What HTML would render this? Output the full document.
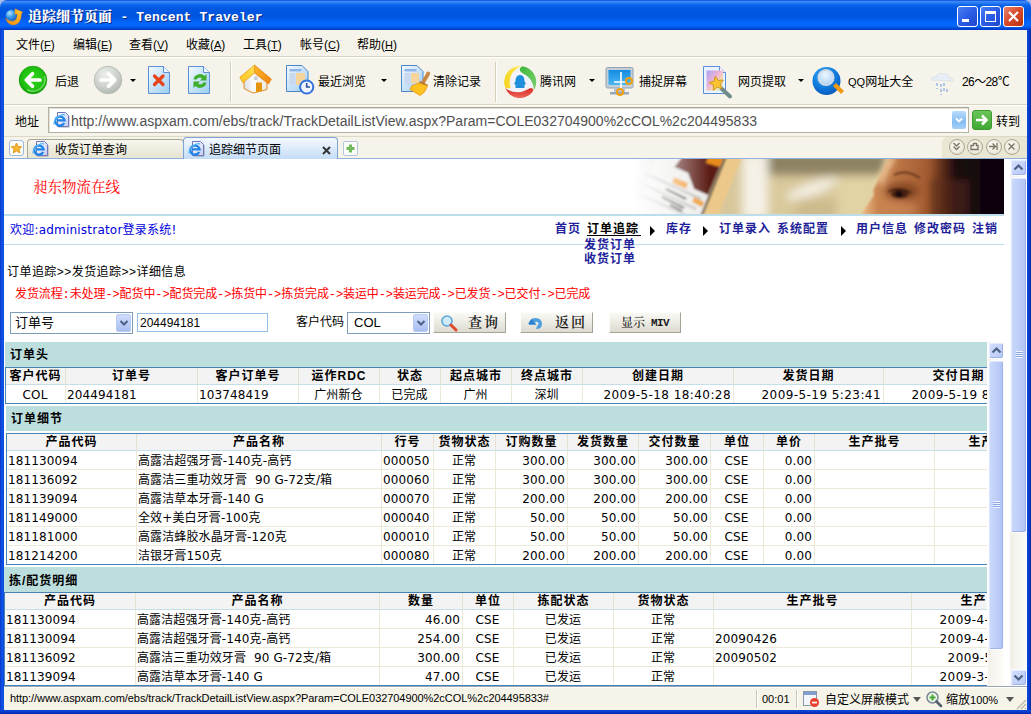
<!DOCTYPE html>
<html lang="zh-CN">
<head>
<meta charset="utf-8">
<title>追踪细节页面 - Tencent Traveler</title>
<style>
*{box-sizing:border-box;margin:0;padding:0}
html,body{width:1031px;height:714px;overflow:hidden}
body{position:relative;background:#0a3fd0;font-family:"Liberation Sans","Noto Sans CJK SC",sans-serif;font-size:12px;color:#000}
.abs{position:absolute}
#frame{position:absolute;left:0;top:0;width:1031px;height:714px;background:linear-gradient(90deg,#0b36c9 0,#0f55e8 2px,#0a4ad8 4px,#0a4ad8 1027px,#0b3ccf 1029px,#062a9c 1031px)}
#titlebar{position:absolute;left:0;top:0;width:1031px;height:30px;border-radius:7px 7px 0 0;
 background:linear-gradient(180deg,#0a44d6 0,#3a8af8 1.5px,#2a7cf4 3px,#0c63ea 5px,#0057e2 9px,#0055e0 17px,#0364fa 22px,#0468ff 26px,#0250dc 28px,#0238c0 30px)}
#title{position:absolute;left:28px;top:8px;height:18px;line-height:18px;color:#fff;font-weight:bold;font-size:14px;white-space:nowrap;text-shadow:1px 1px 0 #0a2a80;font-family:"Liberation Mono","Noto Serif CJK SC",serif}
#title .lat{font-size:13px;letter-spacing:0.1px}
.wbtn{position:absolute;top:6px;width:21px;height:21px;border:1px solid #fff;border-radius:3px;background:linear-gradient(135deg,#4a7ef4 0,#2b5ce6 50%,#1f48cc 100%)}
#client{position:absolute;left:4px;top:30px;width:1023px;height:680px;background:#f6f4ea}
#menubar{position:absolute;left:0;top:0;width:1023px;height:26px;background:#f6f4ea}
#menubar span{position:absolute;top:8px;line-height:14px;font-size:12px;white-space:nowrap}
#menubar u{font-size:11px}
#toolbar{position:absolute;left:0;top:26px;width:1023px;height:48px;border-top:1px solid #d8d4c0;box-shadow:inset 0 1px 0 #fff;background:#f6f4ea}
#toolbar .lbl{position:absolute;top:18px;line-height:14px;font-size:12px;white-space:nowrap}
#addrbar{position:absolute;left:0;top:74px;width:1023px;height:32px;border-top:1px solid #d8d4c0;box-shadow:inset 0 1px 0 #fff;background:#f6f4ea}
#tabbar{position:absolute;left:0;top:106px;width:1023px;height:23px;background:#f6f4ea}
#page{position:absolute;left:0;top:129px;width:1006px;height:527px;background:#fff;overflow:hidden}
#vscroll{position:absolute;left:1006px;top:129px;width:17px;height:527px;background:linear-gradient(90deg,#f0efe6,#fdfdfa)}
#status{position:absolute;left:0;top:656px;width:1023px;height:24px;background:#f6f4e8;border-top:1px solid #9ca6b4;box-shadow:inset 0 1px 0 #fff}

/* ---- page ---- */
#pg{position:absolute;left:-4px;top:-159px;width:1031px;height:714px;font-family:"DejaVu Sans","Noto Sans CJK SC",sans-serif;font-size:12px}
#pg .a{position:absolute;white-space:nowrap;line-height:14px}
.hline{position:absolute;left:4px;width:1000px;height:2px;background:#bcdde9}
.nav{font-weight:bold;color:#1f1f9a;font-family:"Liberation Sans","Noto Sans CJK SC",sans-serif;letter-spacing:1px}
.sim{font-family:"Liberation Mono","Noto Sans CJK SC",monospace}
#inner{position:absolute;left:4px;top:342px;width:983px;height:344px;overflow:hidden;background:#fff}
#inner .in{position:absolute;left:-4px;top:-342px;width:1100px;height:714px}
.bar{position:absolute;background:#bcdedd;font-weight:bold;font-family:"Liberation Sans","Noto Sans CJK SC",sans-serif;letter-spacing:1px}
.bar span{position:absolute;white-space:nowrap;line-height:14px}
table.g{position:absolute;border-collapse:separate;border-spacing:0;table-layout:fixed;border:1px solid #4682b4;background:#fff}
table.g th{height:17px;background:#f3f3f3;border-right:1px solid #e6e2d2;border-bottom:1px solid #c5dfea;font-weight:bold;font-size:12px;line-height:14px;padding:0;text-align:center;white-space:nowrap;overflow:hidden;font-family:"Liberation Sans","Noto Sans CJK SC",sans-serif;letter-spacing:1px}
table.g td{height:19px;border-right:1px solid #ece9d8;border-bottom:1px solid #ece9d8;font-size:12px;line-height:14px;padding:2px 2px 0 1px;white-space:nowrap;overflow:hidden;letter-spacing:0.12px}
table.g tr:last-child td{border-bottom:none;height:18px}
table.g td.c{text-align:center}
table.g td.z{text-align:center;padding-top:1px}
table.g td.r{text-align:right}
table.g td.d{text-align:right;letter-spacing:0.43px}

/* ---- toolbar ---- */
.tsep{position:absolute;top:5px;width:2px;height:40px;border-left:1px solid #d4d0bc;border-right:1px solid #fff}
.dd{position:absolute;top:22px;width:0;height:0;border-top:3px solid #000;border-left:3px solid transparent;border-right:3px solid transparent}
#toolbar svg{position:absolute}

/* ---- address / tabs ---- */
#addrbar .lbl{position:absolute;left:11px;top:10px;line-height:14px;font-size:12px}
#addrbox{position:absolute;left:44px;top:2px;width:921px;height:26px;background:#fff;border:1px solid #b4b2a2;border-top-color:#a8a696;box-shadow:inset 1px 1px 0 #e4e2d6}
#url{position:absolute;left:22px;top:4px;line-height:18px;font-size:14px;color:#505050;white-space:nowrap;font-family:"Liberation Sans",sans-serif}
.tab{position:absolute;border:1px solid #a9a791;border-bottom:none;border-radius:4px 4px 0 0}
.tab span{position:absolute;top:3px;line-height:14px;font-size:12px;white-space:nowrap}
.cbtn{position:absolute;top:3px;width:16px;height:16px;border-radius:50%;border:1px solid #a9a68f;background:radial-gradient(circle at 40% 35%,#fbfaf4,#e3e0cf)}

/* ---- form / scrollbars / status ---- */
.sel{position:absolute;height:22px;background:#fff;border:1px solid #7f9db9}
.sel span{position:absolute;left:4px;top:3px;line-height:14px;font-size:12px;white-space:nowrap}
.sel .ar{position:absolute;right:1px;top:1px;width:15px;height:18px;border-radius:2px;border:1px solid #b7cbf3;background:linear-gradient(180deg,#cfdcfc,#b5c9f6 70%,#a9bdf0)}
.btn{position:absolute;top:312px;height:21px;border:1px solid;border-color:#fdfdfb #a5a398 #a5a398 #fdfdfb;background:linear-gradient(180deg,#f9f9f5,#ecebe3 50%,#dddbd0);color:#1a1a1a;font-weight:600;white-space:nowrap;font-family:"Liberation Serif","Noto Serif CJK SC",serif}
.btn span{position:absolute;line-height:16px}
.sb-thumb{position:absolute;border:1px solid #fbfcff;border-radius:3px;background:linear-gradient(90deg,#cbd9fc,#bfcff9 50%,#b0c2f3);box-shadow:inset -1px -1px 0 #9fb3e8,inset 1px 1px 0 #dfe7fd}
.sb-btn{position:absolute;border:1px solid #fbfcff;border-radius:3px;background:linear-gradient(135deg,#d3dffd,#b7c8f6);box-shadow:inset -1px -1px 0 #9fb3e8,inset 1px 1px 0 #e6ecfe}
.grip{position:absolute;left:4px;width:7px;height:7px;background:repeating-linear-gradient(180deg,#eef3ff 0,#eef3ff 1px,#8da6e6 1px,#8da6e6 2px)}
#status span{position:absolute;top:6px;line-height:14px;font-size:12px;white-space:nowrap}
#status .sep{position:absolute;top:3px;width:2px;height:18px;border-left:1px solid #c9c6b3;border-right:1px solid #fff}
#status .dn{position:absolute;top:10px;width:0;height:0;border-top:5px solid #555;border-left:4px solid transparent;border-right:4px solid transparent}
</style>
</head>
<body>
<div id="frame"></div><div class="abs" style="left:0;top:710px;width:1031px;height:4px;background:linear-gradient(180deg,#0a48d6,#0a3ccc 50%,#04249e)"></div>
<div class="abs" style="left:0;top:0;width:8px;height:8px;background:#a9b8e8"></div><div class="abs" style="left:1023px;top:0;width:8px;height:8px;background:#a9b8e8"></div><div id="titlebar">
  <svg style="position:absolute;left:5px;top:8px" width="18" height="18" viewBox="0 0 18 18"><defs><radialGradient id="ti" cx="0.35" cy="0.3" r="0.8"><stop offset="0" stop-color="#b9e4ff"/><stop offset="0.45" stop-color="#3a9cee"/><stop offset="1" stop-color="#0f5cc4"/></radialGradient><linearGradient id="tio" x1="0" y1="1" x2="1" y2="0"><stop offset="0" stop-color="#f08a10"/><stop offset="1" stop-color="#ffc432"/></linearGradient></defs><circle cx="6.400" cy="7.400" r="5.600" fill="url(#ti)"/><path d="M0.600 10.300 Q3 17.500 9 17 Q16.200 16 16.400 6 L17.600 4 L10 0.800 L9.800 6.500 L12 5.800 Q12.800 11.500 8.500 13 Q4 14 0.600 10.300 Z" fill="url(#tio)" stroke="#e07e0c" stroke-width="0.400"/></svg><div id="title"><span style="font-weight:900">追踪细节页面</span> <span class="lat">- Tencent Traveler</span></div>
  <div class="wbtn" style="left:957px"><div class="abs" style="left:4px;top:12px;width:7px;height:3px;background:#fff"></div></div>
  <div class="wbtn" style="left:980px"><div class="abs" style="left:4px;top:4px;width:11px;height:11px;border:1px solid #fff;border-top-width:3px"></div></div>
  <div class="wbtn" style="left:1003px;background:linear-gradient(135deg,#e8836a 0,#d8492a 50%,#b8320f 100%)"><svg width="19" height="19" viewBox="0 0 19 19" style="position:absolute;left:0;top:0"><path d="M5 5 L14 14 M14 5 L5 14" stroke="#fff" stroke-width="2.200"/></svg></div>
</div>
<div id="client">
  <div id="menubar">
    <span style="left:12px">文件(<u>F</u>)</span>
    <span style="left:69px">编辑(<u>E</u>)</span>
    <span style="left:125px">查看(<u>V</u>)</span>
    <span style="left:182px">收藏(<u>A</u>)</span>
    <span style="left:239px">工具(<u>T</u>)</span>
    <span style="left:296px">帐号(<u>C</u>)</span>
    <span style="left:353px">帮助(<u>H</u>)</span>
  </div>
  <div id="toolbar">
<svg style="left:14px;top:8px" width="30" height="30" viewBox="0 0 30 30"><defs><radialGradient id="gb" cx="0.5" cy="0.45" r="0.55"><stop offset="0" stop-color="#30d41e"/><stop offset="0.7" stop-color="#20c212"/><stop offset="0.88" stop-color="#1ab00e"/><stop offset="1" stop-color="#0f9208"/></radialGradient><radialGradient id="gg" cx="0.4" cy="0.3" r="0.8"><stop offset="0" stop-color="#eef0ec"/><stop offset="0.6" stop-color="#c9cfc8"/><stop offset="1" stop-color="#a9b0a8"/></radialGradient></defs><circle cx="15" cy="15" r="13.800" fill="url(#gb)" stroke="#14a00c" stroke-width="0.800"/><path d="M9 24.500 A12 12 0 0 0 26.500 11" fill="none" stroke="#8ee87e" stroke-width="1.600" opacity="0.7"/><path d="M9 15 H22 M14.500 8.800 L8.300 15 L14.500 21.200" fill="none" stroke="#fff" stroke-width="3.700" stroke-linecap="round" stroke-linejoin="round"/></svg>
<span class="lbl" style="left:51px">后退</span>
<svg style="left:89px;top:8px" width="30" height="30" viewBox="0 0 30 30"><circle cx="15" cy="15" r="13.8" fill="url(#gg)" stroke="#b4bab2" stroke-width="0.8"/><path d="M21 15 H8 M15.500 8.800 L21.700 15 L15.500 21.200" fill="none" stroke="#fff" stroke-width="3.700" stroke-linecap="round" stroke-linejoin="round"/></svg>
<div class="dd" style="left:126px"></div>
<svg style="left:143px;top:8px" width="26" height="30" viewBox="0 0 26 30"><defs><linearGradient id="pgd" x1="0" y1="0" x2="1" y2="1"><stop offset="0" stop-color="#f4faff"/><stop offset="1" stop-color="#9ccdf3"/></linearGradient></defs><path d="M1.500 1.500 H16.500 L22.500 7.500 V28.500 H1.500 Z" fill="url(#pgd)" stroke="#5a90d4" stroke-width="1"/><path d="M16.500 1.500 V7.500 H22.500" fill="#eef7ff" stroke="#5a90d4" stroke-width="1"/><path d="M7.500 11 L16 19.500 M16 11 L7.500 19.500" stroke="#e8431a" stroke-width="3.200" stroke-linecap="round"/></svg>
<svg style="left:183px;top:8px" width="26" height="30" viewBox="0 0 26 30"><path d="M1.500 1.500 H16.500 L22.500 7.500 V28.500 H1.500 Z" fill="url(#pgd)" stroke="#5a90d4" stroke-width="1"/><path d="M16.500 1.500 V7.500 H22.500" fill="#eef7ff" stroke="#5a90d4" stroke-width="1"/><path d="M6.5 14.5 A6.5 6.5 0 0 1 17.5 11 L19.5 9 V15.5 H13 L15 13.4 A3.6 3.6 0 0 0 9.6 14.5 Z" fill="#3fae2a"/><path d="M19.5 17.5 A6.5 6.5 0 0 1 8.5 21 L6.5 23 V16.5 H13 L11 18.6 A3.6 3.6 0 0 0 16.4 17.5 Z" fill="#3fae2a"/></svg>
<div class="tsep" style="left:226px"></div>
<svg style="left:235px;top:7px" width="34" height="32" viewBox="0 0 34 32"><defs><linearGradient id="rfl" x1="0" y1="1" x2="1" y2="0"><stop offset="0" stop-color="#ffc21a"/><stop offset="1" stop-color="#ffe25a"/></linearGradient><linearGradient id="rf" x1="0" y1="0" x2="1" y2="1"><stop offset="0" stop-color="#ffb62a"/><stop offset="1" stop-color="#ee8410"/></linearGradient><linearGradient id="hb" x1="0" y1="0" x2="1" y2="0"><stop offset="0" stop-color="#d9dfe6"/><stop offset="0.4" stop-color="#fbfbf8"/><stop offset="1" stop-color="#eceae2"/></linearGradient></defs><path d="M5 15 V24.500 L14 29 L28 25.500 V15 L15.500 6 Z" fill="url(#hb)" stroke="#e08a22" stroke-width="1"/><path d="M17 18.500 H23 V27 L17 28.300 Z" fill="#e6940e"/><rect x="15" y="12.500" width="3.600" height="3.600" fill="#c8ccd4"/><path d="M15.500 1 L32.300 15 L29.500 20 L15.500 9 Z" fill="url(#rf)" stroke="#e07c10" stroke-width="0.700"/><path d="M15.500 1 L0.800 13.300 L3.800 18.800 L15.500 9 Z" fill="url(#rfl)" stroke="#e8960f" stroke-width="0.700"/></svg>
<svg style="left:281px;top:7px" width="30" height="34" viewBox="0 0 30 34"><path d="M1.5 1.5 H17 L23 7.5 V27.5 H1.5 Z" fill="url(#pgd)" stroke="#4a86c8" stroke-width="1"/><rect x="4.5" y="5" width="12" height="2.400" fill="#8fb4ea"/><rect x="4.500" y="9" width="6" height="12" fill="#c8d8ee"/><rect x="11" y="9" width="9" height="12" fill="#f6d59a"/><circle cx="21.700" cy="23" r="6.600" fill="#f0f5ff" stroke="#3572dc" stroke-width="2"/><path d="M21.700 19 V23 H25" stroke="#2a4ea0" stroke-width="1.600" fill="none"/></svg>
<span class="lbl" style="left:314px">最近浏览</span>
<div class="dd" style="left:377px"></div>
<svg style="left:396px;top:7px" width="32" height="34" viewBox="0 0 32 34"><path d="M1.500 1.500 H17 L23 7.500 V27.500 H1.500 Z" fill="url(#pgd)" stroke="#4a86c8" stroke-width="1"/><rect x="4.500" y="5" width="12" height="2.400" fill="#8fb4ea"/><rect x="4.5" y="9" width="6" height="12" fill="#c8d8ee"/><rect x="11" y="9" width="8" height="10" fill="#f6d59a"/><path d="M28.300 9.500 L23 18.500" stroke="#c98a48" stroke-width="3.800" stroke-linecap="round"/><path d="M19.500 17.800 L27.500 21.500" stroke="#b07030" stroke-width="1.600"/><path d="M19 19 L27.500 22 L24.500 28 L20 31.500 L10 25.500 L12 21.500 Z" fill="#ffc21e" stroke="#e89612" stroke-width="0.800"/></svg>
<span class="lbl" style="left:429px">清除记录</span>
<div class="tsep" style="left:491px"></div>
<svg style="left:499px;top:8px" width="34" height="34" viewBox="0 0 34 34"><defs><linearGradient id="tcy" x1="0" y1="0" x2="1" y2="0"><stop offset="0" stop-color="#f6d21a"/><stop offset="1" stop-color="#fff06a"/></linearGradient><linearGradient id="tcg" x1="0" y1="0" x2="1" y2="1"><stop offset="0" stop-color="#3cb83a"/><stop offset="1" stop-color="#7ed070"/></linearGradient><linearGradient id="tcr" x1="0" y1="0" x2="0" y2="1"><stop offset="0" stop-color="#d82a22"/><stop offset="1" stop-color="#f0685a"/></linearGradient></defs><circle cx="17" cy="17" r="15.500" fill="#f2f2fb"/><path d="M18.500 1 A16 16 0 0 0 2.600 23.500 L7.600 23 Q3.500 8 18.500 1 Z" fill="url(#tcy)"/><path d="M19.500 1.200 A16 16 0 0 1 30.800 25.500 Q31 13.500 18.500 7.500 Q14.500 4 19.500 1.200 Z" fill="url(#tcg)"/><path d="M29.500 27 A16 16 0 0 1 2.400 23.600 Q14 30.500 24.500 24.500 Q28.500 21.500 30.300 24.500 Z" fill="url(#tcr)"/><path d="M17 10 C20.500 10 21.500 13.500 21.500 16 L23 19 L21.500 19.500 C22 21.500 21 22.500 21.500 23 H12.500 C13 22.500 12 21.500 12.500 19.500 L11 19 L12.500 16 C12.500 13.500 13.500 10 17 10 Z" fill="#1f8fdc"/></svg>
<span class="lbl" style="left:536px">腾讯网</span>
<div class="dd" style="left:585px"></div>
<svg style="left:601px;top:9px" width="30" height="32" viewBox="0 0 30 32"><defs><linearGradient id="mon" x1="0" y1="0" x2="0" y2="1"><stop offset="0" stop-color="#148ae2"/><stop offset="1" stop-color="#4ab8f2"/></linearGradient></defs><rect x="1" y="1.500" width="27" height="20.500" rx="1.500" fill="#c3ced9" stroke="#93a2b4" stroke-width="1"/><rect x="3.500" y="4" width="22" height="15" fill="url(#mon)"/><rect x="9" y="22" width="11" height="4" fill="#b8c4d4"/><rect x="5" y="26" width="19" height="2.500" fill="#98a8bc"/><path d="M16 6 V22 M9 16 H22" stroke="#fff" stroke-width="1.600"/><circle cx="24" cy="15" r="3" fill="none" stroke="#f0a010" stroke-width="2"/><circle cx="15" cy="26" r="3" fill="none" stroke="#f0a010" stroke-width="2"/></svg>
<span class="lbl" style="left:635px">捕捉屏幕</span>
<svg style="left:698px;top:8px" width="32" height="34" viewBox="0 0 32 34"><defs><linearGradient id="ex" x1="0" y1="0" x2="1" y2="1"><stop offset="0" stop-color="#a9a4f2"/><stop offset="0.45" stop-color="#f0b4d4"/><stop offset="0.75" stop-color="#f4e9a0"/><stop offset="1" stop-color="#a8d4f8"/></linearGradient></defs><path d="M1.500 1.500 H17.500 L23.500 7.500 V28.500 H1.500 Z" fill="#eaf3fe" stroke="#5a8ed8" stroke-width="1"/><path d="M17.500 1.500 V7.500 H23.500" fill="#fff" stroke="#5a8ed8" stroke-width="1"/><rect x="4.500" y="5.500" width="16.500" height="20" fill="url(#ex)"/><path d="M20 24 L28 31.500" stroke="#6f8c8a" stroke-width="3.800" stroke-linecap="round"/><path d="M13.3 11.1 L16.2 15.4 L21.3 15.0 L18.2 19.1 L20.1 23.9 L15.2 22.1 L11.3 25.4 L11.4 20.3 L7.1 17.5 L12.0 16.1 Z" fill="#f9c432" stroke="#c98e1c" stroke-width="0.900" stroke-linejoin="round"/></svg>
<span class="lbl" style="left:734px">网页提取</span>
<div class="dd" style="left:794px"></div>
<svg style="left:808px;top:9px" width="34" height="32" viewBox="0 0 34 32"><defs><radialGradient id="qq" cx="0.4" cy="0.3" r="0.8"><stop offset="0" stop-color="#48aef6"/><stop offset="0.5" stop-color="#0f7fe0"/><stop offset="1" stop-color="#0850b2"/></radialGradient><radialGradient id="qql" cx="0.45" cy="0.35" r="0.7"><stop offset="0" stop-color="#eef7ff"/><stop offset="1" stop-color="#a9d1f5"/></radialGradient></defs><circle cx="14.500" cy="15" r="14" fill="url(#qq)"/><circle cx="14" cy="11.500" r="7.800" fill="url(#qql)" stroke="#d3d7e0" stroke-width="1.500"/><path d="M22.500 18.500 L30.500 26.500" stroke="#f09a12" stroke-width="4.200" stroke-linecap="butt"/></svg>
<span class="lbl" style="left:844px"><span style="font-size:11px">QQ</span>网址大全</span>
<svg style="left:924px;top:14px" width="28" height="26" viewBox="0 0 28 26"><path d="M3 9 Q3 5 8 6 Q10 1 15 3 Q21 2 21 7 Q26 7 25 10 Z" fill="#e9eef6" stroke="#d5deec" stroke-width="0.800"/><path d="M9 12 V18 M13 13 V24 M16 12 V20 M19 18 V22" stroke="#8fb6e6" stroke-width="1.400" stroke-dasharray="3 2"/></svg>
<span class="lbl" style="left:958px;letter-spacing:-0.6px">26～28℃</span>
</div>
  <div id="addrbar"><span class="lbl">地址</span>
<div id="addrbox"><svg style="position:absolute;left:4px;top:3px" width="17" height="18" viewBox="0 0 17 18"><defs><linearGradient id="iepg" x1="0" y1="0" x2="1" y2="1"><stop offset="0" stop-color="#fff"/><stop offset="1" stop-color="#c4ccf4"/></linearGradient></defs><path d="M4.500 1.500 H12.500 L15.500 4.500 V15.500 H4.500 Z" fill="url(#iepg)" stroke="#6f74b8" stroke-width="1"/><path d="M16.200 5 V16.200 H5.500" fill="none" stroke="#8a8aa8" stroke-width="0.800" opacity="0.7"/><path d="M11.200 12 A4.700 4.500 0 1 1 11.600 9.400 H4.200" fill="none" stroke="#1f84e6" stroke-width="2.300"/><path d="M1.200 13.500 Q0.200 9 6.500 5 Q10.500 2.800 12 4.200" fill="none" stroke="#56b4f4" stroke-width="1.200"/></svg><div id="url">http://www.aspxam.com/ebs/track/TrackDetailListView.aspx?Param=COLE032704900%2cCOL%2c204495833</div>
<div class="abs" style="left:903px;top:3px;width:14px;height:18px;border-radius:2px;background:linear-gradient(180deg,#b9dcfb,#86bdf3 60%,#a7d0f8)"><svg width="14" height="18" viewBox="0 0 14 18" style="position:absolute;left:0;top:0"><path d="M4 7.500 L7 10.500 L10 7.500" fill="none" stroke="#fff" stroke-width="1.800"/></svg></div>
</div>
<div class="abs" style="left:968px;top:5px;width:20px;height:20px;border-radius:3px;border:1px solid #3c9a2e;background:linear-gradient(180deg,#6cc45a,#3fa832)"><svg width="18" height="18" viewBox="0 0 18 18" style="position:absolute;left:0;top:0"><path d="M3 9 H13 M9 4.500 L13.500 9 L9 13.500" fill="none" stroke="#fff" stroke-width="2.600"/></svg></div>
<span class="lbl" style="left:992px;top:10px">转到</span></div>
  <div id="tabbar"><div class="abs" style="left:0;top:0;width:1023px;height:1px;background:#dcd9c6"></div>
<div class="abs" style="left:0;top:22px;width:1023px;height:1px;background:#8fb1df"></div>
<div class="abs" style="left:5px;top:4px;width:15px;height:16px;border:1px solid #9db7dd;border-radius:3px;background:#fdfdf8"><svg width="13" height="14" viewBox="0 0 13 14" style="position:absolute;left:0;top:0"><path d="M6.500 2 L8 5.500 L11.800 5.800 L9 8.300 L9.800 12 L6.500 10 L3.200 12 L4 8.300 L1.200 5.800 L5 5.500 Z" fill="#f7b733" stroke="#d98c12" stroke-width="0.800"/></svg></div>
<div class="tab" style="left:23px;top:3px;width:157px;height:19px;background:linear-gradient(180deg,#f7f6ee,#e6e3d1)"><svg style="position:absolute;left:4px;top:0px" width="17" height="18" viewBox="0 0 17 18"><path d="M4.500 1.500 H12.500 L15.500 4.500 V15.500 H4.500 Z" fill="url(#iepg)" stroke="#6f74b8" stroke-width="1"/><path d="M16.200 5 V16.200 H5.500" fill="none" stroke="#8a8aa8" stroke-width="0.800" opacity="0.7"/><path d="M11.200 12 A4.700 4.500 0 1 1 11.600 9.400 H4.200" fill="none" stroke="#1f84e6" stroke-width="2.300"/><path d="M1.200 13.500 Q0.200 9 6.500 5 Q10.500 2.800 12 4.200" fill="none" stroke="#56b4f4" stroke-width="1.200"/></svg><span style="left:27px;top:3px">收货订单查询</span></div>
<div class="tab" style="left:179px;top:1px;width:155px;height:22px;border-color:#7ea2d6;background:linear-gradient(180deg,#f4f9ff,#c4dcf6)"><svg style="position:absolute;left:4px;top:2px" width="17" height="18" viewBox="0 0 17 18"><path d="M4.500 1.500 H12.500 L15.500 4.500 V15.500 H4.500 Z" fill="url(#iepg)" stroke="#6f74b8" stroke-width="1"/><path d="M16.200 5 V16.200 H5.500" fill="none" stroke="#8a8aa8" stroke-width="0.800" opacity="0.7"/><path d="M11.200 12 A4.700 4.500 0 1 1 11.600 9.400 H4.200" fill="none" stroke="#1f84e6" stroke-width="2.300"/><path d="M1.200 13.500 Q0.200 9 6.500 5 Q10.500 2.800 12 4.200" fill="none" stroke="#56b4f4" stroke-width="1.200"/></svg><span style="left:25px;top:5px">追踪细节页面</span><svg width="11" height="11" viewBox="0 0 11 11" style="position:absolute;left:137px;top:7px"><path d="M2 2 L9 9 M9 2 L2 9" stroke="#333" stroke-width="2"/></svg></div>
<div class="abs" style="left:339px;top:5px;width:15px;height:15px;border:1px solid #b5c7dc;border-radius:2px;background:#fbfcf8"><svg width="13" height="13" viewBox="0 0 13 13" style="position:absolute;left:0;top:0"><path d="M6.500 2.500 V10.500 M2.500 6.500 H10.500" stroke="#6fba5a" stroke-width="3"/></svg></div>
<div class="abs" style="left:938px;top:1px;width:85px;height:21px;border-radius:6px 0 0 0;background:#e9e6d3"></div>
<div class="cbtn" style="left:945px"><svg width="13" height="13" viewBox="0 0 13 13"><path d="M3.500 3 L6.500 6 L9.500 3 M3.500 6.500 L6.500 9.500 L9.500 6.500" fill="none" stroke="#77745f" stroke-width="1.300"/></svg></div>
<div class="cbtn" style="left:963px"><svg width="13" height="13" viewBox="0 0 13 13"><path d="M3 5.500 H5.500 V3.500 H8.500 V5.500 H10 V9.500 H3 Z" fill="none" stroke="#77745f" stroke-width="1.300"/></svg></div>
<div class="cbtn" style="left:982px"><svg width="13" height="13" viewBox="0 0 13 13"><path d="M2 6.500 H8 M5.500 3.500 L8.500 6.500 L5.500 9.500 M10 3 V10" fill="none" stroke="#77745f" stroke-width="1.300"/></svg></div>
<div class="cbtn" style="left:1000px"><svg width="13" height="13" viewBox="0 0 13 13"><path d="M3.500 3.500 L9.500 9.500 M9.500 3.500 L3.500 9.500" fill="none" stroke="#77745f" stroke-width="1.300"/></svg></div></div>
  <div id="page"><div id="pg">
<div class="a" style="left:33px;top:179px;font-size:14.5px;line-height:16px;color:#f00;font-family:'Liberation Serif','Noto Serif CJK SC',serif">昶东物流在线</div>
<div id="banner" class="abs" style="left:600px;top:159px;width:404px;height:55px"><svg width="404" height="55" viewBox="0 0 404 55" style="position:absolute;left:0;top:0">
<defs>
<filter id="bl3" x="-10%" y="-30%" width="120%" height="160%"><feGaussianBlur stdDeviation="3"/></filter>
<filter id="bl1" x="-10%" y="-30%" width="120%" height="160%"><feGaussianBlur stdDeviation="1.200"/></filter>
<filter id="bl6" x="-10%" y="-30%" width="120%" height="160%"><feGaussianBlur stdDeviation="5"/></filter>
<linearGradient id="bfade" x1="0" y1="0" x2="1" y2="0"><stop offset="0" stop-color="#fff"/><stop offset="0.3" stop-color="#fff"/><stop offset="1" stop-color="#fff" stop-opacity="0"/></linearGradient>
<linearGradient id="skin" x1="0" y1="0" x2="1" y2="0"><stop offset="0" stop-color="#f2c28e"/><stop offset="0.12" stop-color="#c98552"/><stop offset="0.42" stop-color="#a96236"/><stop offset="0.7" stop-color="#6e341a"/><stop offset="1" stop-color="#3a1610"/></linearGradient>
<linearGradient id="hair" x1="0" y1="0" x2="1" y2="0"><stop offset="0" stop-color="#3a1610" stop-opacity="0"/><stop offset="0.35" stop-color="#1c0a10"/><stop offset="1" stop-color="#07030a"/></linearGradient>
<clipPath id="bclip"><rect x="0" y="0" width="404" height="55"/></clipPath>
</defs>
<g clip-path="url(#bclip)">
<rect x="20" y="0" width="384" height="55" fill="#d9c79c"/>
<g filter="url(#bl6)">
<rect x="20" y="-5" width="80" height="65" fill="#dcdcd8"/>
<rect x="142" y="-5" width="26" height="65" fill="#f5f1e6"/>
<rect x="168" y="-8" width="118" height="24" fill="#8d8262"/>
<rect x="170" y="22" width="60" height="40" fill="#d9c99b"/>
<ellipse cx="212" cy="30" rx="27" ry="6" fill="#f4f0e4" transform="rotate(-20 212 30)"/>
<rect x="238" y="18" width="46" height="44" fill="#e2d3a4"/>
<rect x="196" y="40" width="40" height="20" fill="#cdbb8c"/>
</g>
<g filter="url(#bl1)" transform="translate(-4 0)">
<path d="M60 -2 L128 -2 L105 57 L40 57 Z" fill="#ecebe8"/>
<path d="M40 22 L100 50 M48 14 L105 40 M35 32 L90 56" stroke="#bdbdbd" stroke-width="2.500"/>
<path d="M86 -2 L128 -2 L112 36 L98 30 L92 14 L78 8 Z" fill="#5c1d14"/>
<path d="M112 -2 L128 -2 L124 8 L110 4 Z" fill="#e98a1c"/>
<path d="M78 18 L92 24 L90 30 L76 24 Z" fill="#f09a2a"/>
<path d="M98 38 L108 43 L106 48 L96 43 Z" fill="#f09a2a"/>
<path d="M70 30 L90 40 M66 38 L88 49 M74 46 L86 52" stroke="#222" stroke-width="2.200"/>
<path d="M128 -2 L146 -2 L122 57 L104 57 Z" fill="#ecc98a"/>
<path d="M128 -2 L131 -2 L107 57 L104 57 Z" fill="#7a6a52"/>
</g>
<g filter="url(#bl1)">
<path d="M289 -2 Q281 12 276 26 Q272 31 274 36 Q268 46 260 57 L404 57 L404 -2 Z" fill="url(#skin)"/>
<rect x="330" y="-2" width="76" height="60" fill="url(#hair)"/>
<g filter="url(#bl3)"><ellipse cx="302" cy="32" rx="17" ry="9" fill="#7a3c1c" opacity="0.75"/><ellipse cx="300" cy="50" rx="18" ry="6" fill="#d08a58" opacity="0.6"/><path d="M289 -2 Q281 12 277 24 L282 24 Q286 12 296 -2 Z" fill="#ffe2b4"/><rect x="330" y="20" width="40" height="40" fill="#5a2810" opacity="0.5"/></g><path d="M294 16 Q306 10 320 19" fill="none" stroke="#6d3a20" stroke-width="2.500"/>
<ellipse cx="300" cy="35" rx="9" ry="4.500" fill="#4a2415"/>
<ellipse cx="299" cy="35" rx="3.500" ry="3.500" fill="#1c0c08"/>
<path d="M288 33 Q298 26 312 34" fill="none" stroke="#3a1a10" stroke-width="1.600"/>
</g>
<rect x="0" y="0" width="110" height="55" fill="url(#bfade)"/>
</g>
</svg></div>
<div class="hline" style="top:214px"></div>
<div class="a" style="left:10px;top:223px;color:#0000e0;letter-spacing:0.21px">欢迎:administrator登录系统!</div>
<div class="a nav" style="left:555px;top:222px">首页</div>
<div class="a nav" style="left:587px;top:222px;color:#000;border-bottom:1px solid #000;height:14px;width:54px">订单追踪</div>
<div class="a" style="left:650px;top:226px;width:0;height:0;border-left:5px solid #000;border-top:5px solid transparent;border-bottom:5px solid transparent"></div>
<div class="a nav" style="left:666px;top:222px">库存</div>
<div class="a" style="left:703px;top:226px;width:0;height:0;border-left:5px solid #000;border-top:5px solid transparent;border-bottom:5px solid transparent"></div>
<div class="a nav" style="left:719px;top:222px">订单录入</div>
<div class="a nav" style="left:777px;top:222px">系统配置</div>
<div class="a" style="left:841px;top:226px;width:0;height:0;border-left:5px solid #000;border-top:5px solid transparent;border-bottom:5px solid transparent"></div>
<div class="a nav" style="left:856px;top:222px">用户信息</div>
<div class="a nav" style="left:914px;top:222px">修改密码</div>
<div class="a nav" style="left:972px;top:222px">注销</div>
<div class="hline" style="top:244px;height:1px"></div>
<div class="a nav" style="left:584px;top:238px">发货订单</div>
<div class="a nav" style="left:584px;top:252px">收货订单</div>
<div class="a" style="left:7px;top:265px;letter-spacing:0.45px;font-family:'Liberation Sans','Noto Sans CJK SC',sans-serif">订单追踪&gt;&gt;发货追踪&gt;&gt;详细信息</div>
<div class="a sim" style="left:15px;top:288px;color:#f00;letter-spacing:-0.1px">发货流程:未处理-&gt;配货中-&gt;配货完成-&gt;拣货中-&gt;拣货完成-&gt;装运中-&gt;装运完成-&gt;已发货-&gt;已交付-&gt;已完成</div>
<div id="form">
<div class="sel" style="left:10px;top:312px;width:123px"><span style="font-family:'Liberation Sans','Noto Sans CJK SC',sans-serif;font-size:13px;top:3px">订单号</span><div class="ar"><svg width="16" height="18" viewBox="0 0 16 18" style="position:absolute;left:-1px;top:-1px"><path d="M4.500 7 L8 10.500 L11.500 7" fill="none" stroke="#4d6185" stroke-width="2"/></svg></div></div>
<div class="abs" style="left:137px;top:313px;width:131px;height:19px;background:#fff;border:1px solid #96bde8"><span class="a" style="left:2px;top:2px;font-family:'Liberation Sans',sans-serif;font-size:12px">204494181</span></div>
<div class="a" style="left:296px;top:315px;font-family:'Liberation Sans','Noto Sans CJK SC',sans-serif">客户代码</div>
<div class="sel" style="left:347px;top:312px;width:83px"><span style="font-family:'Liberation Sans',sans-serif;font-size:13px;left:6px">COL</span><div class="ar"><svg width="16" height="18" viewBox="0 0 16 18" style="position:absolute;left:-1px;top:-1px"><path d="M4.500 7 L8 10.500 L11.500 7" fill="none" stroke="#4d6185" stroke-width="2"/></svg></div></div>
<div class="btn" style="left:433px;width:73px"><svg width="18" height="18" viewBox="0 0 18 18" style="position:absolute;left:6px;top:1px"><circle cx="7" cy="7" r="5" fill="#cfeaf8" stroke="#5aa6d6" stroke-width="1.600"/><path d="M11 11 L16 16" stroke="#e0492a" stroke-width="3" stroke-linecap="round"/></svg><span style="left:34px;top:2px;font-size:14px;letter-spacing:2px">查询</span></div>
<div class="btn" style="left:520px;width:73px"><svg width="18" height="16" viewBox="0 0 18 16" style="position:absolute;left:6px;top:3px"><path d="M2 9 Q1 3 8 2 Q15 2 15 8 Q15 13 9 13 L10 10 Q12 9 11.500 7 Q10 5 8 6 L9.500 9 L2 9 Z" fill="#4d9fe0"/><path d="M1 8 L5 3 L8 8 Z" fill="#2f7fd0"/></svg><span style="left:34px;top:2px;font-size:14px;letter-spacing:2px">返回</span></div>
<div class="btn" style="left:609px;width:72px;font-weight:500"><span style="left:11px;top:2px;font-size:12px">显示</span><span style="left:41px;top:2px;font-size:11px;letter-spacing:-0.6px;font-family:'Liberation Mono',monospace;font-weight:bold">MIV</span></div>
</div>
<div id="inner"><div class="in">
<div class="bar" style="left:5px;top:342px;width:1100px;height:25px"><span style="left:5px;top:6px">订单头</span></div>
<table class="g" style="left:5px;top:367px;width:1030px"><colgroup><col style="width:60px"><col style="width:132px"><col style="width:101px"><col style="width:81px"><col style="width:61px"><col style="width:71px"><col style="width:71px"><col style="width:151px"><col style="width:150px"><col style="width:150px"></colgroup><tr><th>客户代码</th><th>订单号</th><th>客户订单号</th><th>运作RDC</th><th>状态</th><th>起点城市</th><th>终点城市</th><th>创建日期</th><th>发货日期</th><th>交付日期</th></tr><tr><td class="c">COL</td><td>204494181</td><td>103748419</td><td class="z">广州新仓</td><td class="z">已完成</td><td class="z">广州</td><td class="z">深圳</td><td class="d">2009-5-18 18:40:28</td><td class="d">2009-5-19 5:23:41</td><td class="d">2009-5-19 8:50:20</td></tr></table>
<div class="bar" style="left:6px;top:406px;width:1100px;height:25px"><span style="left:5px;top:6px">订单细节</span></div>
<table class="g" style="left:6px;top:433px;width:1050px"><colgroup><col style="width:130px"><col style="width:245px"><col style="width:52px"><col style="width:62px"><col style="width:72px"><col style="width:71px"><col style="width:72px"><col style="width:53px"><col style="width:51px"><col style="width:120px"><col style="width:120px"></colgroup><tr><th>产品代码</th><th>产品名称</th><th>行号</th><th>货物状态</th><th>订购数量</th><th>发货数量</th><th>交付数量</th><th>单位</th><th>单价</th><th>生产批号</th><th>生产日期</th></tr><tr><td>181130094</td><td>高露洁超强牙膏-140克-高钙</td><td>000050</td><td class="z">正常</td><td class="r">300.00</td><td class="r">300.00</td><td class="r">300.00</td><td class="c">CSE</td><td class="r">0.00</td><td></td><td></td></tr><tr><td>181136092</td><td>高露洁三重功效牙膏&nbsp; 90 G-72支/箱</td><td>000060</td><td class="z">正常</td><td class="r">300.00</td><td class="r">300.00</td><td class="r">300.00</td><td class="c">CSE</td><td class="r">0.00</td><td></td><td></td></tr><tr><td>181139094</td><td>高露洁草本牙膏-140 G</td><td>000070</td><td class="z">正常</td><td class="r">200.00</td><td class="r">200.00</td><td class="r">200.00</td><td class="c">CSE</td><td class="r">0.00</td><td></td><td></td></tr><tr><td>181149000</td><td>全效+美白牙膏-100克</td><td>000040</td><td class="z">正常</td><td class="r">50.00</td><td class="r">50.00</td><td class="r">50.00</td><td class="c">CSE</td><td class="r">0.00</td><td></td><td></td></tr><tr><td>181181000</td><td>高露洁蜂胶水晶牙膏-120克</td><td>000010</td><td class="z">正常</td><td class="r">50.00</td><td class="r">50.00</td><td class="r">50.00</td><td class="c">CSE</td><td class="r">0.00</td><td></td><td></td></tr><tr><td>181214200</td><td>洁银牙膏150克</td><td>000080</td><td class="z">正常</td><td class="r">200.00</td><td class="r">200.00</td><td class="r">200.00</td><td class="c">CSE</td><td class="r">0.00</td><td></td><td></td></tr></table>
<div class="bar" style="left:4px;top:567px;width:1100px;height:25px"><span style="left:5px;top:7px">拣/配货明细</span></div>
<table class="g" style="left:4px;top:592px;width:1059px"><colgroup><col style="width:131px"><col style="width:244px"><col style="width:83px"><col style="width:51px"><col style="width:100px"><col style="width:100px"><col style="width:198px"><col style="width:150px"></colgroup><tr><th>产品代码</th><th>产品名称</th><th>数量</th><th>单位</th><th>拣配状态</th><th>货物状态</th><th>生产批号</th><th>生产日期</th></tr><tr><td>181130094</td><td>高露洁超强牙膏-140克-高钙</td><td class="r">46.00</td><td class="c">CSE</td><td class="z">已发运</td><td class="z">正常</td><td></td><td class="d">2009-4-13 0:00:00</td></tr><tr><td>181130094</td><td>高露洁超强牙膏-140克-高钙</td><td class="r">254.00</td><td class="c">CSE</td><td class="z">已发运</td><td class="z">正常</td><td>20090426</td><td class="d">2009-4-26 0:00:00</td></tr><tr><td>181136092</td><td>高露洁三重功效牙膏&nbsp; 90 G-72支/箱</td><td class="r">300.00</td><td class="c">CSE</td><td class="z">已发运</td><td class="z">正常</td><td>20090502</td><td class="d">2009-5-2 0:00:00</td></tr><tr><td>181139094</td><td>高露洁草本牙膏-140 G</td><td class="r">47.00</td><td class="c">CSE</td><td class="z">已发运</td><td class="z">正常</td><td></td><td class="d">2009-3-28 0:00:00</td></tr></table>
</div></div>
<div id="iscroll" class="abs" style="left:988px;top:342px;width:16px;height:344px;background:linear-gradient(90deg,#f3f1ea,#fcfcfa)">
<div class="sb-btn" style="left:0;top:0;width:16px;height:17px"><svg width="15" height="15" viewBox="0 0 15 15" style="position:absolute;left:0;top:0"><path d="M3.500 9.500 L7.500 5.500 L11.500 9.500" fill="none" stroke="#4d6185" stroke-width="2.200"/></svg></div>
<div class="sb-thumb" style="left:0;top:18px;width:16px;height:290px"><div class="grip" style="top:140px"></div></div>
</div>
</div></div>
  <div id="vscroll"><div class="sb-btn" style="left:0;top:0;width:17px;height:17px"><svg width="15" height="15" viewBox="0 0 15 15" style="position:absolute;left:0;top:0"><path d="M3.500 9.500 L7.500 5.500 L11.500 9.500" fill="none" stroke="#4d6185" stroke-width="2.200"/></svg></div>
<div class="sb-thumb" style="left:0;top:18px;width:17px;height:356px"><div class="grip" style="top:173px;left:5px"></div></div>
<div class="sb-btn" style="left:0;top:510px;width:17px;height:17px"><svg width="15" height="15" viewBox="0 0 15 15" style="position:absolute;left:0;top:0"><path d="M3.500 5.500 L7.500 9.500 L11.500 5.500" fill="none" stroke="#4d6185" stroke-width="2.200"/></svg></div></div>
  <div id="status"><span style="left:6px;top:4px;font-size:11px;font-family:'Liberation Sans',sans-serif;letter-spacing:-0.065px">http://www.aspxam.com/ebs/track/TrackDetailListView.aspx?Param=COLE032704900%2cCOL%2c204495833#</span>
<div class="sep" style="left:752px"></div>
<span style="left:758px;top:5px;font-size:11px">00:01</span>
<div class="sep" style="left:792px"></div>
<svg width="18" height="18" viewBox="0 0 18 18" style="position:absolute;left:798px;top:3px"><rect x="1.500" y="1.500" width="13" height="14" fill="#f4f6fb" stroke="#8a97ad" stroke-width="1"/><rect x="2" y="2" width="12" height="3" fill="#7f9fd0"/><circle cx="12.500" cy="12.500" r="4.500" fill="#e8402c"/><rect x="10" y="11.700" width="5" height="1.700" fill="#fff"/></svg>
<span style="left:821px">自定义屏蔽模式</span>
<div class="dn" style="left:909px"></div>
<svg width="18" height="18" viewBox="0 0 18 18" style="position:absolute;left:921px;top:3px"><circle cx="7.500" cy="7.500" r="5.500" fill="#eef8e8" stroke="#7a8894" stroke-width="1.500"/><path d="M7.500 4.500 V10.500 M4.500 7.500 H10.500" stroke="#4aa63a" stroke-width="2"/><path d="M11.500 11.500 L16 16" stroke="#55606c" stroke-width="2.600" stroke-linecap="round"/></svg>
<span style="left:942px">缩放<span style="font-size:11px;position:static">100%</span></span>
<div class="dn" style="left:1002px"></div>
<svg width="12" height="12" viewBox="0 0 12 12" style="position:absolute;left:1011px;top:11px"><path d="M11 2 L2 11 M11 6 L6 11 M11 10 L10 11" stroke="#b8b5a2" stroke-width="1.200"/></svg></div>
</div>
</body>
</html>
